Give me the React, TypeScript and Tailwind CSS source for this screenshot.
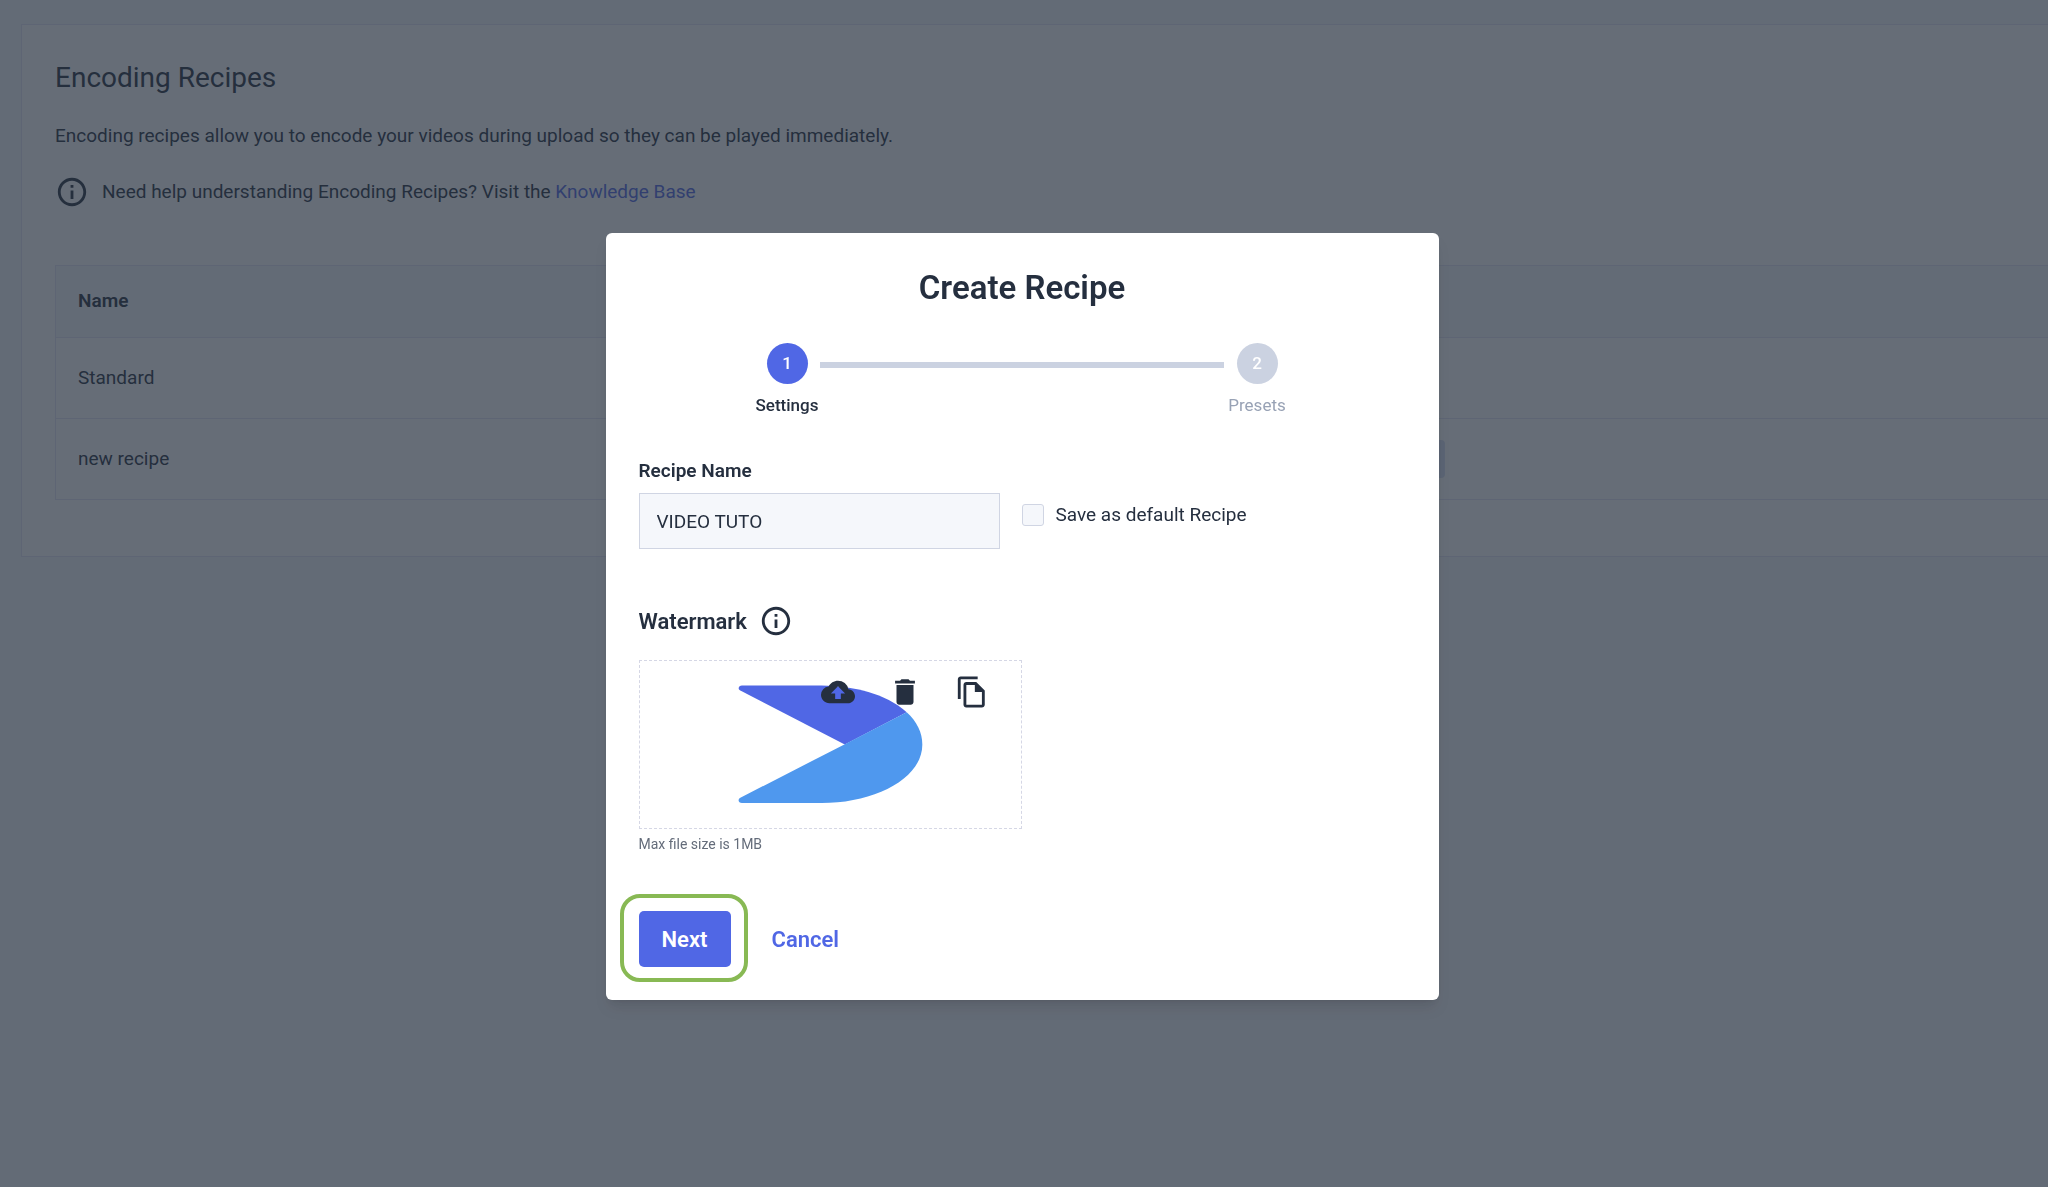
import React, { useState } from "react";
import { MdCloudUpload, MdDelete, MdInfoOutline, MdOutlineFileCopy } from "react-icons/md";

interface Recipe {
  id: number;
  name: string;
  isDefault: boolean;
}

const recipes: Recipe[] = [
  { id: 1, name: "Standard", isDefault: false },
  { id: 2, name: "new recipe", isDefault: true },
];

function RecipesTable({ recipes }: { recipes: Recipe[] }) {
  return (
    <table className="w-full border-collapse border border-r-0 border-[#e4e5f3] text-left">
      <thead className="bg-[#f6f7fa]">
        <tr className="h-18">
          <th className="w-[65%] px-[22px] font-semibold">Name</th>
          <th className="px-5" />
        </tr>
      </thead>
      <tbody>
        {recipes.map((recipe) => (
          <tr key={recipe.id} className="h-[81px] border-t border-[#e4e5f3]">
            <td className="px-[22px]">{recipe.name}</td>
            <td className="px-5">
              {recipe.isDefault && <span className="block h-[38px] w-[74px] rounded bg-[#d9dff3]" />}
            </td>
          </tr>
        ))}
      </tbody>
    </table>
  );
}

function RecipesPage() {
  return (
    <main className="overflow-hidden pt-6 pl-[21px]">
      <section className="border border-r-0 border-[#e4e5f3] bg-white pt-[33px] pb-14 pl-[33px]">
        <h1 className="text-[28px] leading-10">Encoding Recipes</h1>
        <p className="mt-6 leading-7">
          Encoding recipes allow you to encode your videos during upload so they can be played immediately.
        </p>
        <p className="mt-[25px] mb-14 flex items-center gap-[13px]">
          <MdInfoOutline className="size-[34px]" />
          <span>
            Need help understanding Encoding Recipes? Visit the{" "}
            <a href="#knowledge-base" className="text-[#5067e5]">
              Knowledge Base
            </a>
          </span>
        </p>
        <RecipesTable recipes={recipes} />
      </section>
    </main>
  );
}

function Stepper() {
  return (
    <ol className="mx-auto mt-[33px] flex w-[532px] max-w-full justify-between text-[17px] font-medium">
      <li className="flex w-[62px] flex-col items-center">
        <span className="flex size-[41px] items-center justify-center rounded-full bg-[#5067e5] text-white">1</span>
        <span className="mt-[9px] leading-6">Settings</span>
      </li>
      <li aria-hidden="true" className="mt-[19px] h-[6px] w-[404px] bg-[#cbd2e1]" />
      <li className="flex w-[62px] flex-col items-center">
        <span className="flex size-[41px] items-center justify-center rounded-full bg-[#cbd2e1] text-white">2</span>
        <span className="mt-[9px] leading-6 font-normal text-[#98a2b5]">Presets</span>
      </li>
    </ol>
  );
}

function WatermarkLogo() {
  return (
    <svg viewBox="354 134 556 356" className="h-[119px] w-[185px]" aria-hidden="true">
      <path
        d="M366 135H605C705 137 795 158 861 215L675 312L361 150C352 145 356 135 366 135Z"
        fill="#5067e5"
      />
      <path
        d="M861 215C892 243 908 276 908 312C908 415 765 488 605 488H366C355 488 352 477 361 472L675 311Z"
        fill="#4f98ee"
      />
    </svg>
  );
}

function WatermarkBox() {
  return (
    <div className="relative mt-[22px] flex h-[169px] w-1/2 min-w-[383px] items-center justify-center border border-dashed border-[#d5d7e5]">
      <WatermarkLogo />
      <div className="absolute top-[14px] right-8 flex gap-[33px]">
        <button type="button" aria-label="Upload">
          <MdCloudUpload className="size-[34px]" />
        </button>
        <button type="button" aria-label="Delete">
          <MdDelete className="size-[34px]" />
        </button>
        <button type="button" aria-label="Copy">
          <MdOutlineFileCopy className="size-[34px]" />
        </button>
      </div>
    </div>
  );
}

function CreateRecipeModal() {
  const [name, setName] = useState("VIDEO TUTO");
  const [isDefault, setIsDefault] = useState(false);

  return (
    <form
      role="dialog"
      aria-labelledby="modal-title"
      className="w-[833px] max-w-full rounded-md bg-white p-[33px] shadow-lg"
      onSubmit={(e) => e.preventDefault()}
    >
      <h2 id="modal-title" className="text-center text-[33px] leading-11 font-semibold">
        Create Recipe
      </h2>
      <Stepper />

      <label htmlFor="recipe-name" className="mt-10 block leading-7 font-semibold">
        Recipe Name
      </label>
      <div className="mt-2 flex items-start gap-[22px]">
        <input
          id="recipe-name"
          type="text"
          value={name}
          onChange={(e) => setName(e.target.value)}
          className="h-14 w-[361px] border border-[#d0d5e3] bg-[#f5f7fb] px-[17px] outline-none"
        />
        <label className="mt-2 flex items-center gap-3 leading-7">
          <input
            type="checkbox"
            checked={isDefault}
            onChange={(e) => setIsDefault(e.target.checked)}
            className="size-[22px] appearance-none rounded-[3px] border border-[#d0d5e3] bg-[#f5f7fb] checked:bg-[#5067e5]"
          />
          Save as default Recipe
        </label>
      </div>

      <h3 className="mt-[55px] flex items-center gap-3 text-[22px] font-semibold">
        Watermark
        <MdInfoOutline className="size-[34px]" />
      </h3>
      <WatermarkBox />
      <p className="mt-[5px] text-sm leading-5 text-[#646c7a]">Max file size is 1MB</p>

      <div className="mt-[57px] flex items-center gap-[41px] text-[22px] font-semibold">
        <div className="relative">
          <button type="submit" className="h-14 w-[92px] rounded-[5px] bg-[#5067e5] text-white">
            Next
          </button>
          <span className="pointer-events-none absolute -top-[17px] -right-[17px] -bottom-[15px] -left-[19px] rounded-[20px] border-4 border-[#88b954]" />
        </div>
        <button type="button" className="text-[#5067e5]">
          Cancel
        </button>
      </div>
    </form>
  );
}

export default function App() {
  return (
    <div className="min-h-screen bg-[#f6f7fa] font-[Roboto,sans-serif] text-[19px] text-[#252f3f]">
      <RecipesPage />
      <div className="fixed inset-0 flex items-start justify-center overflow-auto bg-[#252f3d]/70 pt-[233px] pr-1">
        <CreateRecipeModal />
      </div>
    </div>
  );
}
